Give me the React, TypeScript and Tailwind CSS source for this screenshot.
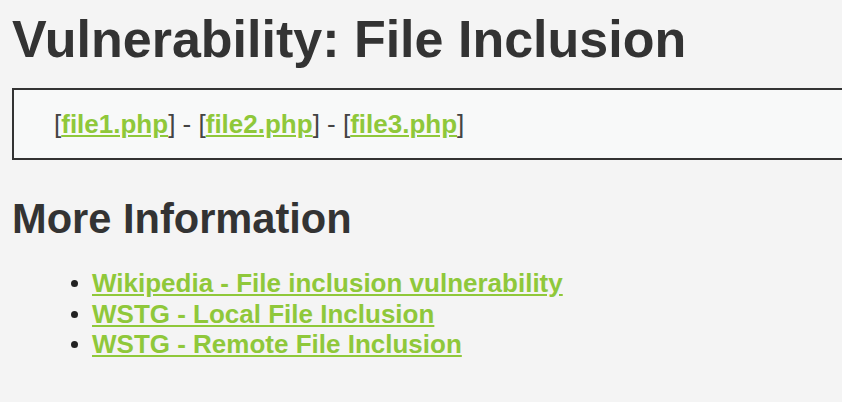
const FILES = ["file1.php", "file2.php", "file3.php"];

const LINKS = [
  "Wikipedia - File inclusion vulnerability",
  "WSTG - Local File Inclusion",
  "WSTG - Remote File Inclusion",
];

const linkCls = "font-bold text-[#8fc83a] underline";

export default function App() {
  return (
    <div
      className="min-h-[402px] w-[842px] overflow-hidden bg-[#f4f4f4] pl-[12px] text-[26px] leading-[30px] text-[#444]"
      style={{ fontFamily: '"Liberation Sans", Arial, sans-serif' }}
    >
      <h1 className="pt-[9px] text-[52px] font-bold leading-[60px] text-[#333]">
        Vulnerability: File Inclusion
      </h1>

      {/* file picker box, runs off the right edge */}
      <div className="mt-[19px] w-[900px] border-2 border-[#333] bg-[#f8f9f9] py-[19px] pl-[40px] whitespace-nowrap">
        {FILES.map((f, i) => (
          <span key={f}>
            {i > 0 && " - "}[<a className={linkCls}>{f}</a>]
          </span>
        ))}
      </div>

      <h2 className="mt-[35px] text-[41.6px] font-bold leading-[48px] text-[#333]">
        More Information
      </h2>

      <ul className="mt-[25px] pl-[80px] leading-[30.5px] text-[#222]">
        {LINKS.map((l) => (
          <li key={l} className="relative">
            <span className="absolute left-[-21px] top-[12px] h-[7px] w-[7px] rounded-full bg-[#222]" />
            <a className={linkCls}>{l}</a>
          </li>
        ))}
      </ul>
    </div>
  );
}
